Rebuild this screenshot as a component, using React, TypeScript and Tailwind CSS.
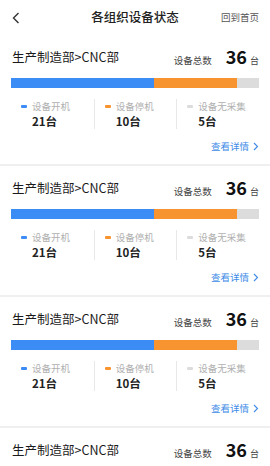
import React from "react";

const font = { fontFamily: '"Noto Sans CJK SC", "Noto Sans", sans-serif' };

function Card() {
  return (
    <div className="px-[11px] pt-[13px] pb-[11px] bg-white">
      <div className="flex items-center h-[18px]">
        <div className="text-[12.5px] leading-[18px] text-[#1a1a1a] pl-[1px]">生产制造部&gt;CNC部</div>
        <div className="ml-auto flex items-baseline">
          <span className="text-[9.5px] text-[#444] mr-[14px]">设备总数</span>
          <span className="text-[18px] font-bold text-[#111] leading-[18px]">36</span>
          <span className="text-[9px] text-[#444] ml-[3px]">台</span>
        </div>
      </div>
      <div className="mt-[12px] flex h-[10px] w-full">
        <div className="w-[143px] bg-[#3b8cf5]" />
        <div className="w-[83px] bg-[#f7942f]" />
        <div className="flex-1 bg-[#dcdcdc]" />
      </div>
      <div className="mt-[11px] grid grid-cols-3">
        {[
          { c: "bg-[#3b8cf5]", l: "设备开机", n: "21台", b: false },
          { c: "bg-[#f7942f]", l: "设备停机", n: "10台", b: true },
          { c: "bg-[#dcdcdc]", l: "设备无采集", n: "5台", b: true },
        ].map((it, i) => (
          <div key={i} className={`pl-[10px] ${it.b ? "border-l border-[#e8e8e8]" : ""}`}>
            <div className="flex items-center h-[14px]">
              <div className={`w-[6px] h-[3px] rounded-[1px] ${it.c}`} />
              <span className="ml-[5px] text-[9.5px] leading-[14px] text-[#b0b0b0]">{it.l}</span>
            </div>
            <div className="ml-[11px] h-[16px] text-[11.5px] leading-[16px] font-bold text-[#222]">{it.n}</div>
          </div>
        ))}
      </div>
      <div className="mt-[10px] flex justify-end items-center h-[14px]">
        <span className="text-[9.5px] leading-[14px] text-[#3d8ae6]">查看详情</span>
        <svg width="6" height="9" viewBox="0 0 6 9" className="ml-[4px]">
          <path d="M1 1 L4.5 4.5 L1 8" fill="none" stroke="#3d8ae6" strokeWidth="1.1" />
        </svg>
      </div>
    </div>
  );
}

export default function App() {
  return (
    <div className="w-[270px] h-[466px] overflow-hidden bg-white" style={font}>
      <div className="h-[35px] flex items-center relative px-[11px]">
        <svg width="8" height="12" viewBox="0 0 8 12" className="ml-[1px]">
          <path d="M6.5 1 L1.5 6 L6.5 11" fill="none" stroke="#333" strokeWidth="1.4" />
        </svg>
        <div className="absolute left-0 right-0 text-center text-[12.5px] font-medium text-[#222] pointer-events-none">
          各组织设备状态
        </div>
        <div className="ml-auto text-[9.5px] text-[#555]">回到首页</div>
      </div>
      <Card />
      <div className="h-[2px] bg-[#efefef]" />
      <Card />
      <div className="h-[2px] bg-[#efefef]" />
      <Card />
      <div className="h-[2px] bg-[#efefef]" />
      <Card />
    </div>
  );
}
